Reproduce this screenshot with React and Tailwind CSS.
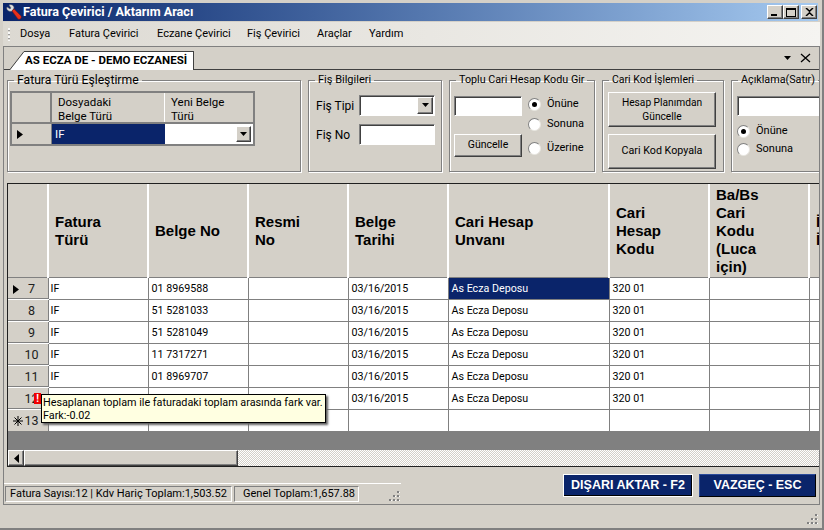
import React from "react";

const ui = "font-['Roboto',sans-serif]";
const sunken = "border border-t-[#808080] border-l-[#808080] border-r-white border-b-white bg-white shadow-[inset_1px_1px_0_#404040]";
const raised = "bg-[#d4d0c8] border border-t-white border-l-white border-r-[#404040] border-b-[#404040] shadow-[inset_-1px_-1px_0_#808080]";
const groupBox = "shrink-0 min-w-0 h-[99px] border border-[#808080] shadow-[inset_1px_1px_0_#fff,1px_1px_0_#fff]";

const rows = [
  { n: "7", current: true, belge: "01 8969588", selected: true },
  { n: "8", belge: "51 5281033" },
  { n: "9", belge: "51 5281049" },
  { n: "10", belge: "11 7317271" },
  { n: "11", belge: "01 8969707" },
  { n: "12", belge: "" },
];

const columns = [
  { lines: ["Fatura", "Türü"], w: "w-[100px]" },
  { lines: ["Belge No"], w: "w-[100px]" },
  { lines: ["Resmi", "No"], w: "w-[100px]" },
  { lines: ["Belge", "Tarihi"], w: "w-[100px]" },
  { lines: ["Cari Hesap", "Unvanı"], w: "w-[161px]" },
  { lines: ["Cari", "Hesap", "Kodu"], w: "w-[100px]" },
  { lines: ["Ba/Bs", "Cari", "Kodu", "(Luca", "için)"], w: "w-[100px]" },
  { lines: ["İl", "İlçe"], w: "w-[100px]" },
];

function Arrow() {
  return (
    <svg width="9" height="5" viewBox="0 0 9 5">
      <path d="M1 0h7L4.500 4z" fill="#000" />
    </svg>
  );
}

function Grip() {
  return (
    <svg width="11" height="11" viewBox="0 0 11 11">
      <g fill="#808080">
        <rect x="8" y="0" width="2" height="2" />
        <rect x="4" y="4" width="2" height="2" />
        <rect x="8" y="4" width="2" height="2" />
        <rect x="0" y="8" width="2" height="2" />
        <rect x="4" y="8" width="2" height="2" />
        <rect x="8" y="8" width="2" height="2" />
      </g>
      <g fill="#fff">
        <rect x="10" y="1" width="1" height="1" />
        <rect x="6" y="5" width="1" height="1" />
        <rect x="10" y="5" width="1" height="1" />
        <rect x="2" y="9" width="1" height="1" />
        <rect x="6" y="9" width="1" height="1" />
        <rect x="10" y="9" width="1" height="1" />
      </g>
    </svg>
  );
}

function Group({ title, titleSize, className, children }) {
  return (
    <fieldset className={`${groupBox} ${className}`}>
      <legend className={`ml-[6px] px-[3px] leading-[14px] text-black whitespace-nowrap ${titleSize}`}>{title}</legend>
      {children}
    </fieldset>
  );
}

function Radio({ label, on, className = "" }) {
  return (
    <div className={`flex items-center gap-[5px] h-[14px] ${className}`}>
      <span className="w-[13px] h-[13px] rounded-full bg-white border border-t-[#808080] border-l-[#808080] border-r-[#e8e6e0] border-b-[#e8e6e0] flex items-center justify-center shrink-0">
        {on && <span className="w-[5px] h-[5px] rounded-full bg-black" />}
      </span>
      <span className="ml-[1px] text-[11px] leading-[14px] whitespace-nowrap">{label}</span>
    </div>
  );
}

function WinButton({ children, className = "" }) {
  return <div className={`${raised} w-[16px] h-[14px] flex items-center justify-center ${className}`}>{children}</div>;
}

function Combo({ className = "" }) {
  return (
    <div className={`${sunken} h-[21px] flex justify-end p-[1px] ${className}`}>
      <div className={`${raised} w-[16px] h-full flex items-center justify-center`}>
        <Arrow />
      </div>
    </div>
  );
}

export default function App() {
  return (
    <div className={`${ui} w-[824px] h-[530px] overflow-hidden bg-[#d4d0c8] text-black flex flex-col pt-[3px] pl-[3px] pr-[1px] border-r-2 border-b-2 border-r-[#808080] border-b-[#808080]`}>
      {/* title bar */}
      <div className="h-[18px] w-[815px] shrink-0 flex items-center pl-[3px] pr-[1px] bg-gradient-to-r from-[#0a246a] to-[#a6caf0]">
        <svg width="16" height="16" viewBox="0 0 16 16" className="shrink-0">
          <path d="M1 3l3 2 1-1-2-3c2-1 5 0 5 3l-2 3C3 8 0 6 1 3z" fill="#e0e0e0" stroke="#707070" strokeWidth="0.5" />
          <path d="M6 7l2-2 7 7c1 2-1 4-3 3z" fill="#e8301c" stroke="#801810" strokeWidth="0.5" />
        </svg>
        <span className="ml-[1px] text-[12.600px] font-bold leading-none text-white whitespace-nowrap">Fatura Çevirici / Aktarım Aracı</span>
        <div className="ml-auto flex items-center">
          <WinButton className="items-end pb-[2px]">
            <span className="w-[6px] h-[2px] bg-black -ml-[2px]" />
          </WinButton>
          <WinButton>
            <span className="w-[10px] h-[9px] border border-black border-t-2" />
          </WinButton>
          <WinButton className="ml-[2px]">
            <svg width="9" height="8" viewBox="0 0 9 8">
              <path d="M1 0l3.500 3.200L8 0M1 8l3.500-3.200L8 8" stroke="#000" strokeWidth="1.500" fill="none" />
            </svg>
          </WinButton>
        </div>
      </div>

      {/* menu */}
      <div className="mt-[1px] h-[24px] w-[817px] shrink-0 flex items-center bg-gradient-to-r from-[#dcd9d2] to-[#f5f4f1] text-[11px]">
        <div className="ml-[5px] w-[2px] h-[13px] bg-[repeating-linear-gradient(#f8f8f8_0_2px,#a0a0a0_2px_3px,transparent_3px_4px)]" />
        <div className="ml-[10px] w-[49px]">Dosya</div>
        <div className="w-[88px]">Fatura Çevirici</div>
        <div className="w-[90px]">Eczane Çevirici</div>
        <div className="w-[70px]">Fiş Çevirici</div>
        <div className="w-[52px]">Araçlar</div>
        <div>Yardım</div>
      </div>

      {/* main frame */}
      <div className="h-[459px] w-[817px] shrink-0 border border-[#808080] flex flex-col overflow-hidden">
        {/* tab strip */}
        <div className="h-[23px] shrink-0 border-b border-[#404040] flex items-end pl-[6px]">
          <div className="flex items-end h-[19px] -mb-[1px]">
            <svg width="15" height="19" viewBox="0 0 15 19" className="block shrink-0">
              <path d="M0 19L14 1h1v18z" fill="#fff" />
              <path d="M0 18.500L14 0.500h1" stroke="#404040" fill="none" />
            </svg>
            <div className="h-[19px] w-[169px] bg-white border-t border-r border-[#404040] text-[11.500px] font-bold leading-[17px] whitespace-nowrap">
              AS ECZA DE - DEMO ECZANESİ
            </div>
          </div>
          <div className="ml-auto mr-[8px] flex items-center gap-[8px] h-[22px]">
            <Arrow />
            <svg width="11" height="10" viewBox="0 0 11 10">
              <path d="M1 1l9 8M10 1l-9 8" stroke="#000" strokeWidth="1.300" fill="none" />
            </svg>
          </div>
        </div>

        {/* group boxes */}
        <div className="mt-[3px] pl-[3px] flex gap-[7px] overflow-hidden shrink-0 h-[100px] text-[12px]">
          <Group title="Fatura Türü Eşleştirme" titleSize="text-[12.200px]" className="w-[294px]">
            <div className="mt-[4px] ml-[2px] w-[245px] h-[55px] border-2 border-[#808080] bg-[#d4d0c8] flex flex-col text-[11.500px] leading-[14px]">
              <div className="flex h-[31px] shrink-0 border-b-2 border-[#808080]">
                <div className="w-[40px] border-r-2 border-[#808080]" />
                <div className="w-[113px] pl-[6px] pt-[2px] border-r border-white">Dosyadaki<br />Belge Türü</div>
                <div className="pl-[6px] pt-[2px]">Yeni Belge<br />Türü</div>
              </div>
              <div className="flex flex-1">
                <div className="w-[40px] flex items-center pl-[5px] border-r border-[#808080]">
                  <svg width="6" height="9" viewBox="0 0 6 9"><path d="M0 0l6 4.500L0 9z" fill="#000" /></svg>
                </div>
                <div className="w-[113px] bg-[#0a246a] text-white flex items-center pl-[3px]">IF</div>
                <div className="flex-1 bg-white flex items-center justify-end pr-[2px]">
                  <div className={`${raised} w-[15px] h-[16px] flex items-center justify-center`}><Arrow /></div>
                </div>
              </div>
            </div>
          </Group>

          <Group title="Fiş Bilgileri" titleSize="text-[11px]" className="w-[134px]">
            <div className="mt-[8px] ml-[7px] flex items-center">
              <span className="w-[43px]">Fiş Tipi</span>
              <Combo className="w-[76px]" />
            </div>
            <div className="mt-[8px] ml-[7px] flex items-center">
              <span className="w-[43px]">Fiş No</span>
              <div className={`${sunken} w-[76px] h-[21px]`} />
            </div>
          </Group>

          <Group title="Toplu Cari Hesap Kodu Gir" titleSize="text-[10.750px]" className="w-[146px]">
            <div className="flex ml-[4px]">
              <div className="w-[68px] shrink-0 mt-[9px]">
                <div className={`${sunken} h-[20px]`} />
                <button className={`${raised} w-[68px] h-[23px] mt-[18px] text-[10.500px] leading-none`}>Güncelle</button>
              </div>
              <div className="ml-[6px] mt-[10px]">
                <Radio label="Önüne" on />
                <Radio label="Sonuna" className="mt-[6px]" />
                <Radio label="Üzerine" className="mt-[10px]" />
              </div>
            </div>
          </Group>

          <Group title="Cari Kod İşlemleri" titleSize="text-[10.500px]" className="w-[122px]">
            <div className="ml-[5px] mr-[7px] mt-[5px] flex flex-col gap-[7px]">
              <button className={`${raised} h-[35px] text-[10.200px] leading-[14px]`}>Hesap Planımdan<br />Güncelle</button>
              <button className={`${raised} h-[35px] text-[10.700px] leading-none`}>Cari Kod Kopyala</button>
            </div>
          </Group>

          <Group title="Açıklama(Satır)" titleSize="text-[10.750px]" className="w-[100px]">
            <div className="ml-[5px] mt-[9px]">
              <div className={`${sunken} h-[20px] w-[90px]`} />
              <Radio label="Önüne" on className="mt-[8px]" />
              <Radio label="Sonuna" className="mt-[4px]" />
            </div>
          </Group>
        </div>

        {/* data grid */}
        <div className="mt-[10px] ml-[3px] w-[813px] h-[284px] shrink-0 border-t border-l border-b border-[#202020] bg-[#808080] flex flex-col overflow-hidden">
          <div className="h-[266px] shrink-0 overflow-hidden relative">
            <table className="table-fixed border-collapse w-[901px] text-[10.700px]">
              <thead>
                <tr className="h-[93px] bg-[#d4d0c8]">
                  <th className="w-[40px] border-r-2 border-white border-b border-b-[#808080]" />
                  {columns.map((c) => (
                    <th key={c.lines.join(" ")} className={`${c.w} border-r-2 border-r-white border-b border-b-[#808080] pl-[6px] pt-[2px] text-left align-middle font-['Liberation_Sans',sans-serif] text-[15px] font-bold leading-[18px]`}>
                      {c.lines.map((l) => <div key={l}>{l}</div>)}
                    </th>
                  ))}
                </tr>
              </thead>
              <tbody>
                {rows.map((r) => (
                  <tr key={r.n} className="h-[22px] bg-white">
                    <td className="bg-[#d4d0c8] border-r border-r-[#808080] border-b border-b-white shadow-[inset_0_-1px_0_#808080] p-0">
                      <div className="flex items-center h-[21px] pt-[2px] text-[12.500px] text-[#202020]">
                        <span className="w-[15px] pl-[5px]">
                          {r.current && <svg width="6" height="9" viewBox="0 0 6 9"><path d="M0 0l6 4.500L0 9z" fill="#000" /></svg>}
                        </span>
                        <span className="w-[17px] text-center">{r.n}</span>
                      </div>
                    </td>
                    <td className="border border-[#808080] pl-[2px] pt-[3px]">IF</td>
                    <td className="border border-[#808080] pl-[3px] pt-[3px]">{r.belge}</td>
                    <td className="border border-[#808080]" />
                    <td className="border border-[#808080] pl-[3px] pt-[3px]">03/16/2015</td>
                    <td className={`border border-[#808080] pl-[3px] pt-[3px] ${r.selected ? "bg-[#0a246a] text-white" : ""}`}>As Ecza Deposu</td>
                    <td className="border border-[#808080] pl-[3px] pt-[3px]">320 01</td>
                    <td className="border border-[#808080]" />
                    <td className="border border-[#808080]" />
                  </tr>
                ))}
                <tr className="h-[22px] bg-white">
                  <td className="bg-[#d4d0c8] border-r border-[#808080] p-0">
                    <div className="flex items-center h-[21px] pt-[2px] text-[12.500px] text-[#202020]">
                      <span className="w-[16px] pl-[5px]">
                        <svg width="10" height="10" viewBox="0 0 10 10" className="block">
                          <path d="M5 0v10M0 5h10M1.500 1.500l7 7M8.500 1.500l-7 7" stroke="#000" strokeWidth="1" fill="none" />
                        </svg>
                      </span>
                      <span className="w-[15px] text-center">13</span>
                    </div>
                  </td>
                  {columns.map((c) => <td key={c.lines.join(" ")} className="border-x border-t border-[#808080]" />)}
                </tr>
              </tbody>
            </table>

            {/* validation tooltip */}
            <div className="absolute left-[26px] top-[209px] w-[7px] h-[11px] bg-[#f00000] text-white text-[10px] font-bold leading-[11px] text-center">!</div>
            <div className="absolute left-[33px] top-[210px] w-[285px] h-[29px] bg-[#ffffe1] border border-black shadow-[2px_2px_2px_#606060] pl-[1px] text-[10.800px] leading-[13px] pt-[1px] whitespace-nowrap">
              Hesaplanan toplam ile faturadaki toplam arasında fark var.<br />Fark:-0.02
            </div>
          </div>

          {/* horizontal scrollbar */}
          <div className="h-[16px] shrink-0 flex bg-[repeating-conic-gradient(#d4d0c8_0_25%,#ffffff_0_50%)] bg-[length:2px_2px]">
            <div className={`${raised} w-[16px] flex items-center justify-center`}>
              <svg width="5" height="9" viewBox="0 0 5 9"><path d="M5 0L0 4.500 5 9z" fill="#000" /></svg>
            </div>
            <div className={`${raised} w-[214px]`} />
          </div>
        </div>

        {/* summary + actions */}
        <div className="flex flex-1 pr-[3px]">
          <div className="w-[397px] mt-[16px] border-t border-t-white flex items-start pt-[2px] pl-[1px] text-[11px] leading-[14px]">
            <div className="h-[16px] w-[227px] border border-t-[#808080] border-l-[#808080] border-r-white border-b-white pl-[4px] whitespace-nowrap overflow-hidden">
              Fatura Sayısı:12 | Kdv Hariç Toplam:1,503.52
            </div>
            <div className="ml-[2px] h-[16px] w-[125px] border border-t-[#808080] border-l-[#808080] border-r-white border-b-white pl-[8px] whitespace-nowrap overflow-hidden">
              Genel Toplam:1,657.88
            </div>
            <div className="ml-auto mt-[5px] mr-[1px]"><Grip /></div>
          </div>
          <div className="ml-auto mt-[7px] flex gap-[6px] font-['Liberation_Sans',sans-serif] text-[12.500px] font-bold text-white">
            <button className="w-[130px] h-[23px] bg-[#0a246a] border border-white shadow-[inset_-1px_-1px_0_#000]">DIŞARI AKTAR - F2</button>
            <button className="w-[117px] h-[23px] bg-[#0a246a] border border-[#2a4a9a] border-r-black border-b-black">VAZGEÇ - ESC</button>
          </div>
        </div>
      </div>

      {/* window status strip */}
      <div className="flex-1 flex items-end justify-end pr-[3px] pb-[3px]">
        <Grip />
      </div>
    </div>
  );
}
